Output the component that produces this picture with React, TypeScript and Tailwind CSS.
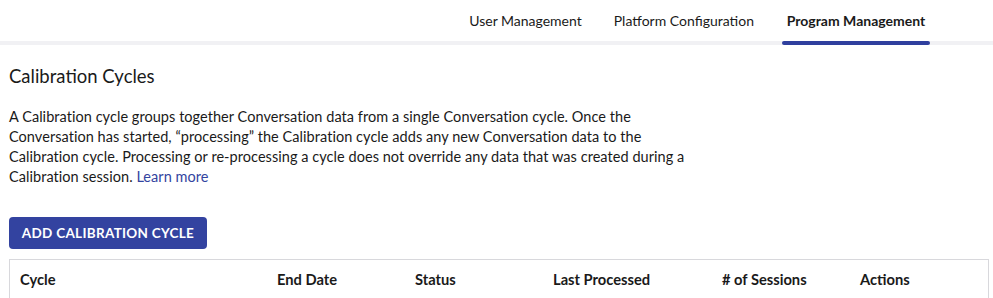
import React from "react";

export default function App() {
  const font = { fontFamily: "Lato, 'Open Sans', sans-serif" } as React.CSSProperties;
  return (
    <div className="w-[993px] h-[298px] bg-white overflow-hidden text-[#1a1a1a]" style={font}>
      <div className="border-b-4 border-[#f1f1f4] flex justify-end pr-[63px]">
        <div className="flex gap-[24px] -mb-[4px]">
          <div className="px-[4px] h-[45px] flex flex-col">
            <div className="flex-1 flex items-center text-[14px]">User Management</div>
            <div className="h-[4px]" />
          </div>
          <div className="px-[4px] h-[45px] flex flex-col">
            <div className="flex-1 flex items-center text-[14px]">Platform Configuration</div>
            <div className="h-[4px]" />
          </div>
          <div className="h-[45px] flex flex-col w-[148px]">
            <div className="flex-1 flex items-center justify-center text-[14px] font-bold">Program Management</div>
            <div className="h-[4px] rounded-full bg-[#2f3f9e]" />
          </div>
        </div>
      </div>
      <div className="px-[9px]">
        <h1 className="text-[18.5px] mt-[20px] leading-[22px]">Calibration Cycles</h1>
        <p className="text-[14.5px] leading-[20px] mt-[20px] w-[760px] tracking-[0.05px]">
          A Calibration cycle groups together Conversation data from a single Conversation cycle. Once the
          <br />
          Conversation has started, “processing” the Calibration cycle adds any new Conversation data to the
          <br />
          Calibration cycle. Processing or re-processing a cycle does not override any data that was created during a
          <br />
          Calibration session. <span className="text-[#3344a0]">Learn more</span>
        </p>
        <button className="mt-[30px] h-[32px] w-[198px] rounded-[4px] bg-[#3343a0] text-white text-[13.5px] font-bold tracking-[0.3px]">
          ADD CALIBRATION CYCLE
        </button>
        <div className="mt-[10px] w-[980px] border border-[#d8d8dc] h-[60px]">
          <div className="grid grid-cols-[257px_138px_138px_169px_138px_1fr] pl-[10px] pt-[8px] text-[14.7px] font-bold">
            <div>Cycle</div>
            <div>End Date</div>
            <div>Status</div>
            <div>Last Processed</div>
            <div># of Sessions</div>
            <div>Actions</div>
          </div>
        </div>
      </div>
    </div>
  );
}
